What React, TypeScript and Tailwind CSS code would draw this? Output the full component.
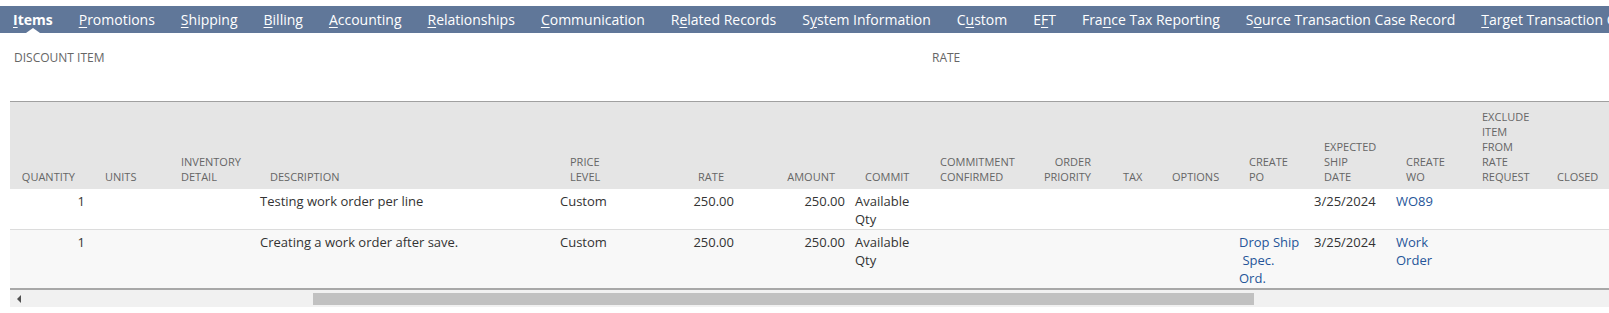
const TABS: { label: string; key: number }[] = [
  { label: "Items", key: 0 },
  { label: "Promotions", key: 0 },
  { label: "Shipping", key: 0 },
  { label: "Billing", key: 0 },
  { label: "Accounting", key: 0 },
  { label: "Relationships", key: 0 },
  { label: "Communication", key: 0 },
  { label: "Related Records", key: 1 },
  { label: "System Information", key: 1 },
  { label: "Custom", key: 1 },
  { label: "EFT", key: 1 },
  { label: "France Tax Reporting", key: 3 },
  { label: "Source Transaction Case Record", key: 1 },
  { label: "Target Transaction Case Record", key: 0 },
];

type Col = {
  lines: string[];
  align: "left" | "right";
  hdr: string;
  cell: string;
};

// header cells sit 15px in, values 5px in
const COLS: Col[] = [
  { lines: ["QUANTITY"], align: "right", hdr: "pr-[15px]", cell: "pr-[5px] text-right" },
  { lines: ["UNITS"], align: "left", hdr: "pl-[15px]", cell: "pl-[5px]" },
  { lines: ["INVENTORY", "DETAIL"], align: "left", hdr: "pl-[15px]", cell: "pl-[5px]" },
  { lines: ["DESCRIPTION"], align: "left", hdr: "pl-[15px]", cell: "pl-[5px]" },
  { lines: ["PRICE", "LEVEL"], align: "left", hdr: "pl-[15px]", cell: "pl-[5px]" },
  { lines: ["RATE"], align: "right", hdr: "pr-[15px]", cell: "pr-[5px] text-right" },
  { lines: ["AMOUNT"], align: "right", hdr: "pr-[15px]", cell: "pr-[5px] text-right" },
  { lines: ["COMMIT"], align: "left", hdr: "pl-[15px]", cell: "pl-[5px]" },
  { lines: ["COMMITMENT", "CONFIRMED"], align: "left", hdr: "pl-[15px]", cell: "pl-[5px]" },
  { lines: ["ORDER", "PRIORITY"], align: "right", hdr: "pr-[17px]", cell: "pr-[5px] text-right" },
  { lines: ["TAX"], align: "left", hdr: "pl-[15px]", cell: "pl-[5px]" },
  { lines: ["OPTIONS"], align: "left", hdr: "pl-[15px]", cell: "pl-[5px]" },
  { lines: ["CREATE", "PO"], align: "left", hdr: "pl-[15px]", cell: "pl-[5px]" },
  { lines: ["EXPECTED", "SHIP", "DATE"], align: "left", hdr: "pl-[15px]", cell: "pl-[5px]" },
  { lines: ["CREATE", "WO"], align: "left", hdr: "pl-[15px]", cell: "pl-[5px]" },
  { lines: ["EXCLUDE", "ITEM", "FROM", "RATE", "REQUEST"], align: "left", hdr: "pl-[15px]", cell: "pl-[5px]" },
  { lines: ["CLOSED"], align: "left", hdr: "pl-[15px]", cell: "pl-[5px]" },
];

const GRID =
  "grid grid-cols-[80px_76px_89px_300px_85px_99px_111px_75px_105px_78px_49px_77px_75px_82px_76px_75px_98px]";

function TabLabel({ label, at }: { label: string; at: number }) {
  return (
    <>
      {label.slice(0, at)}
      <u className="underline-offset-2">{label.charAt(at)}</u>
      {label.slice(at + 1)}
    </>
  );
}

function Link({ children }: { children: React.ReactNode }) {
  return <span className="text-[#255599]">{children}</span>;
}

const ROWS: { cls: string; cells: React.ReactNode[] }[] = [
  {
    cls: "h-[41px] bg-white border-b border-[#dcdcdc]",
    cells: [
      "1",
      "",
      "",
      "Testing work order per line",
      "Custom",
      "250.00",
      "250.00",
      <>Available<br />Qty</>,
      "",
      "",
      "",
      "",
      "",
      "3/25/2024",
      <Link>WO89</Link>,
      "",
      "",
    ],
  },
  {
    cls: "h-[60px] bg-[#f8f8f8] border-b-2 border-[#a8a8a8]",
    cells: [
      "1",
      "",
      "",
      "Creating a work order after save.",
      "Custom",
      "250.00",
      "250.00",
      <>Available<br />Qty</>,
      "",
      "",
      "",
      "",
      <Link>Drop Ship<br />&nbsp;Spec.<br />Ord.</Link>,
      "3/25/2024",
      <Link>Work<br />Order</Link>,
      "",
      "",
    ],
  },
];

export default function App() {
  return (
    <div className="w-[1609px] h-[313px] bg-white font-['Open_Sans',sans-serif] overflow-hidden">
      <div className="mt-[6px] h-[27px] bg-[#607799] flex items-center whitespace-nowrap overflow-hidden">
        {TABS.map((t, i) => (
          <div
            key={t.label}
            className={`relative h-full flex items-center px-[13px] text-[14px] text-white ${
              i === 0 ? "font-bold" : ""
            }`}
          >
            <TabLabel label={t.label} at={t.key} />
            {i === 0 && (
              <span className="absolute bottom-0 left-1/2 -translate-x-1/2 w-0 h-0 border-l-[7px] border-r-[7px] border-b-[5px] border-l-transparent border-r-transparent border-b-white" />
            )}
          </div>
        ))}
      </div>

      <div className="flex h-[68px] pt-[17px] text-[12px] text-[#666] leading-[15px]">
        <div className="pl-[14px] w-[932px]">DISCOUNT ITEM</div>
        <div>RATE</div>
      </div>

      <div className="ml-[10px] overflow-hidden">
        <div className="w-[1630px]">
          <div className={`${GRID} h-[88px] bg-[#e5e5e5] border-t border-[#a0a0a0] text-[11px] leading-[15px] text-[#666]`}>
            {COLS.map((c, i) => (
              <div
                key={i}
                className={`flex flex-col justify-end pb-[5px] ${c.hdr} ${
                  c.align === "right" ? "items-end" : "items-start"
                }`}
              >
                {c.lines.map((l) => (
                  <div key={l}>{l}</div>
                ))}
              </div>
            ))}
          </div>
          {ROWS.map((r, ri) => (
            <div key={ri} className={`${GRID} ${r.cls} text-[13px] leading-[18px] text-[#333]`}>
              {r.cells.map((cell, ci) => (
                <div key={ci} className={`pt-[3px] whitespace-nowrap ${COLS[ci].cell}`}>
                  {cell}
                </div>
              ))}
            </div>
          ))}
        </div>
        <div className="h-[17px] bg-[#f1f1f1] flex items-center">
          <div className="w-[18px] flex items-center justify-center">
            <span className="w-0 h-0 border-t-[4px] border-b-[4px] border-r-[4px] border-t-transparent border-b-transparent border-r-[#505050]" />
          </div>
          <div className="ml-[285px] w-[941px] h-[12px] bg-[#c1c1c1]" />
        </div>
      </div>
    </div>
  );
}
